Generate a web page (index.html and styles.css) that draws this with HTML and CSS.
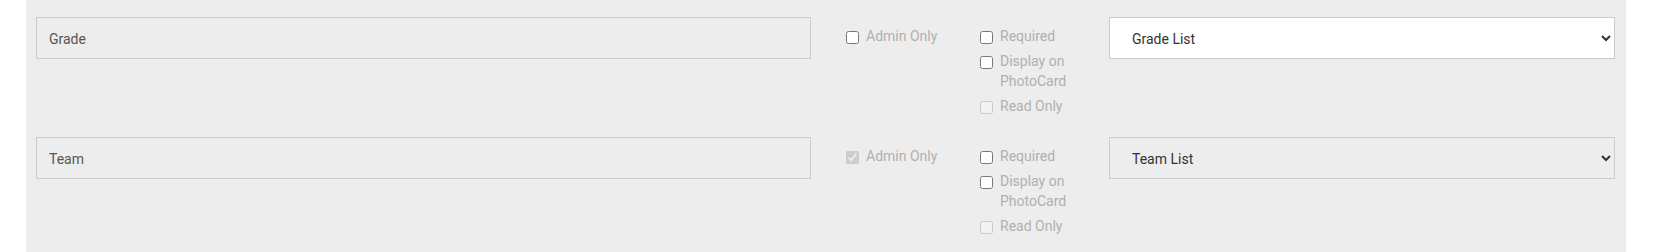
FILE: index.html
```html
<!DOCTYPE html>
<html>
<head>
<meta charset="utf-8">
<link rel="stylesheet" href="styles.css">
</head>
<body>
<div class="panel">
  <div class="field-row">
    <input class="name-input" type="text" value="Grade">
    <div class="col-admin">
      <label class="check"><input type="checkbox"><span>Admin Only</span></label>
    </div>
    <div class="col-flags">
      <label class="check"><input type="checkbox"><span>Required</span></label>
      <label class="check"><input type="checkbox"><span>Display on PhotoCard</span></label>
      <label class="check"><input type="checkbox" disabled><span>Read Only</span></label>
    </div>
    <select class="list-select">
      <option>Grade List</option>
    </select>
  </div>
  <div class="field-row">
    <input class="name-input" type="text" value="Team">
    <div class="col-admin">
      <label class="check"><input type="checkbox" checked disabled><span>Admin Only</span></label>
    </div>
    <div class="col-flags">
      <label class="check"><input type="checkbox"><span>Required</span></label>
      <label class="check"><input type="checkbox"><span>Display on PhotoCard</span></label>
      <label class="check"><input type="checkbox" disabled><span>Read Only</span></label>
    </div>
    <select class="list-select list-select--muted">
      <option>Team List</option>
    </select>
  </div>
</div>
</body>
</html>
```

FILE: styles.css
```css
html, body {
  margin: 0;
  padding: 0;
  background: #ffffff;
  font-family: Roboto, "Liberation Sans", sans-serif;
  font-size: 14px;
}

.panel {
  width: 1600px;
  margin: 0 0 0 26px;
  box-sizing: border-box;
  background: #ededed;
  padding: 17px 11px 15px 10px;
  display: flex;
  flex-direction: column;
  gap: 20px;
}

.field-row {
  display: flex;
  align-items: flex-start;
}

.name-input {
  width: 775px;
  height: 42px;
  box-sizing: border-box;
  border: 1px solid #cccccc;
  background: #ededed;
  color: #555555;
  font-family: Roboto, "Liberation Sans", sans-serif;
  font-size: 14px;
  padding: 1px 12px 0 12px;
  margin: 0;
  outline: none;
}

.col-admin {
  width: 134px;
  margin-left: 35px;
  padding-top: 9px;
}

.col-flags {
  width: 129px;
  padding-top: 9px;
  padding-bottom: 1px;
  display: flex;
  flex-direction: column;
  gap: 5px;
}

.check {
  display: flex;
  align-items: flex-start;
  gap: 7px;
  color: #b0b0b0;
  line-height: 20px;
  width: 110px;
}

.check input {
  margin: 5px 0 0 0;
  width: 13px;
  height: 13px;
  flex: none;
}

.list-select {
  width: 506px;
  height: 42px;
  box-sizing: border-box;
  border: 1px solid #cccccc;
  border-radius: 0;
  background: #ffffff;
  color: #333333;
  font-family: Roboto, "Liberation Sans", sans-serif;
  font-size: 14px;
  padding: 1px 5px 0 18px;
  margin: 0;
}

.list-select--muted {
  background: #ededed;
}
```
